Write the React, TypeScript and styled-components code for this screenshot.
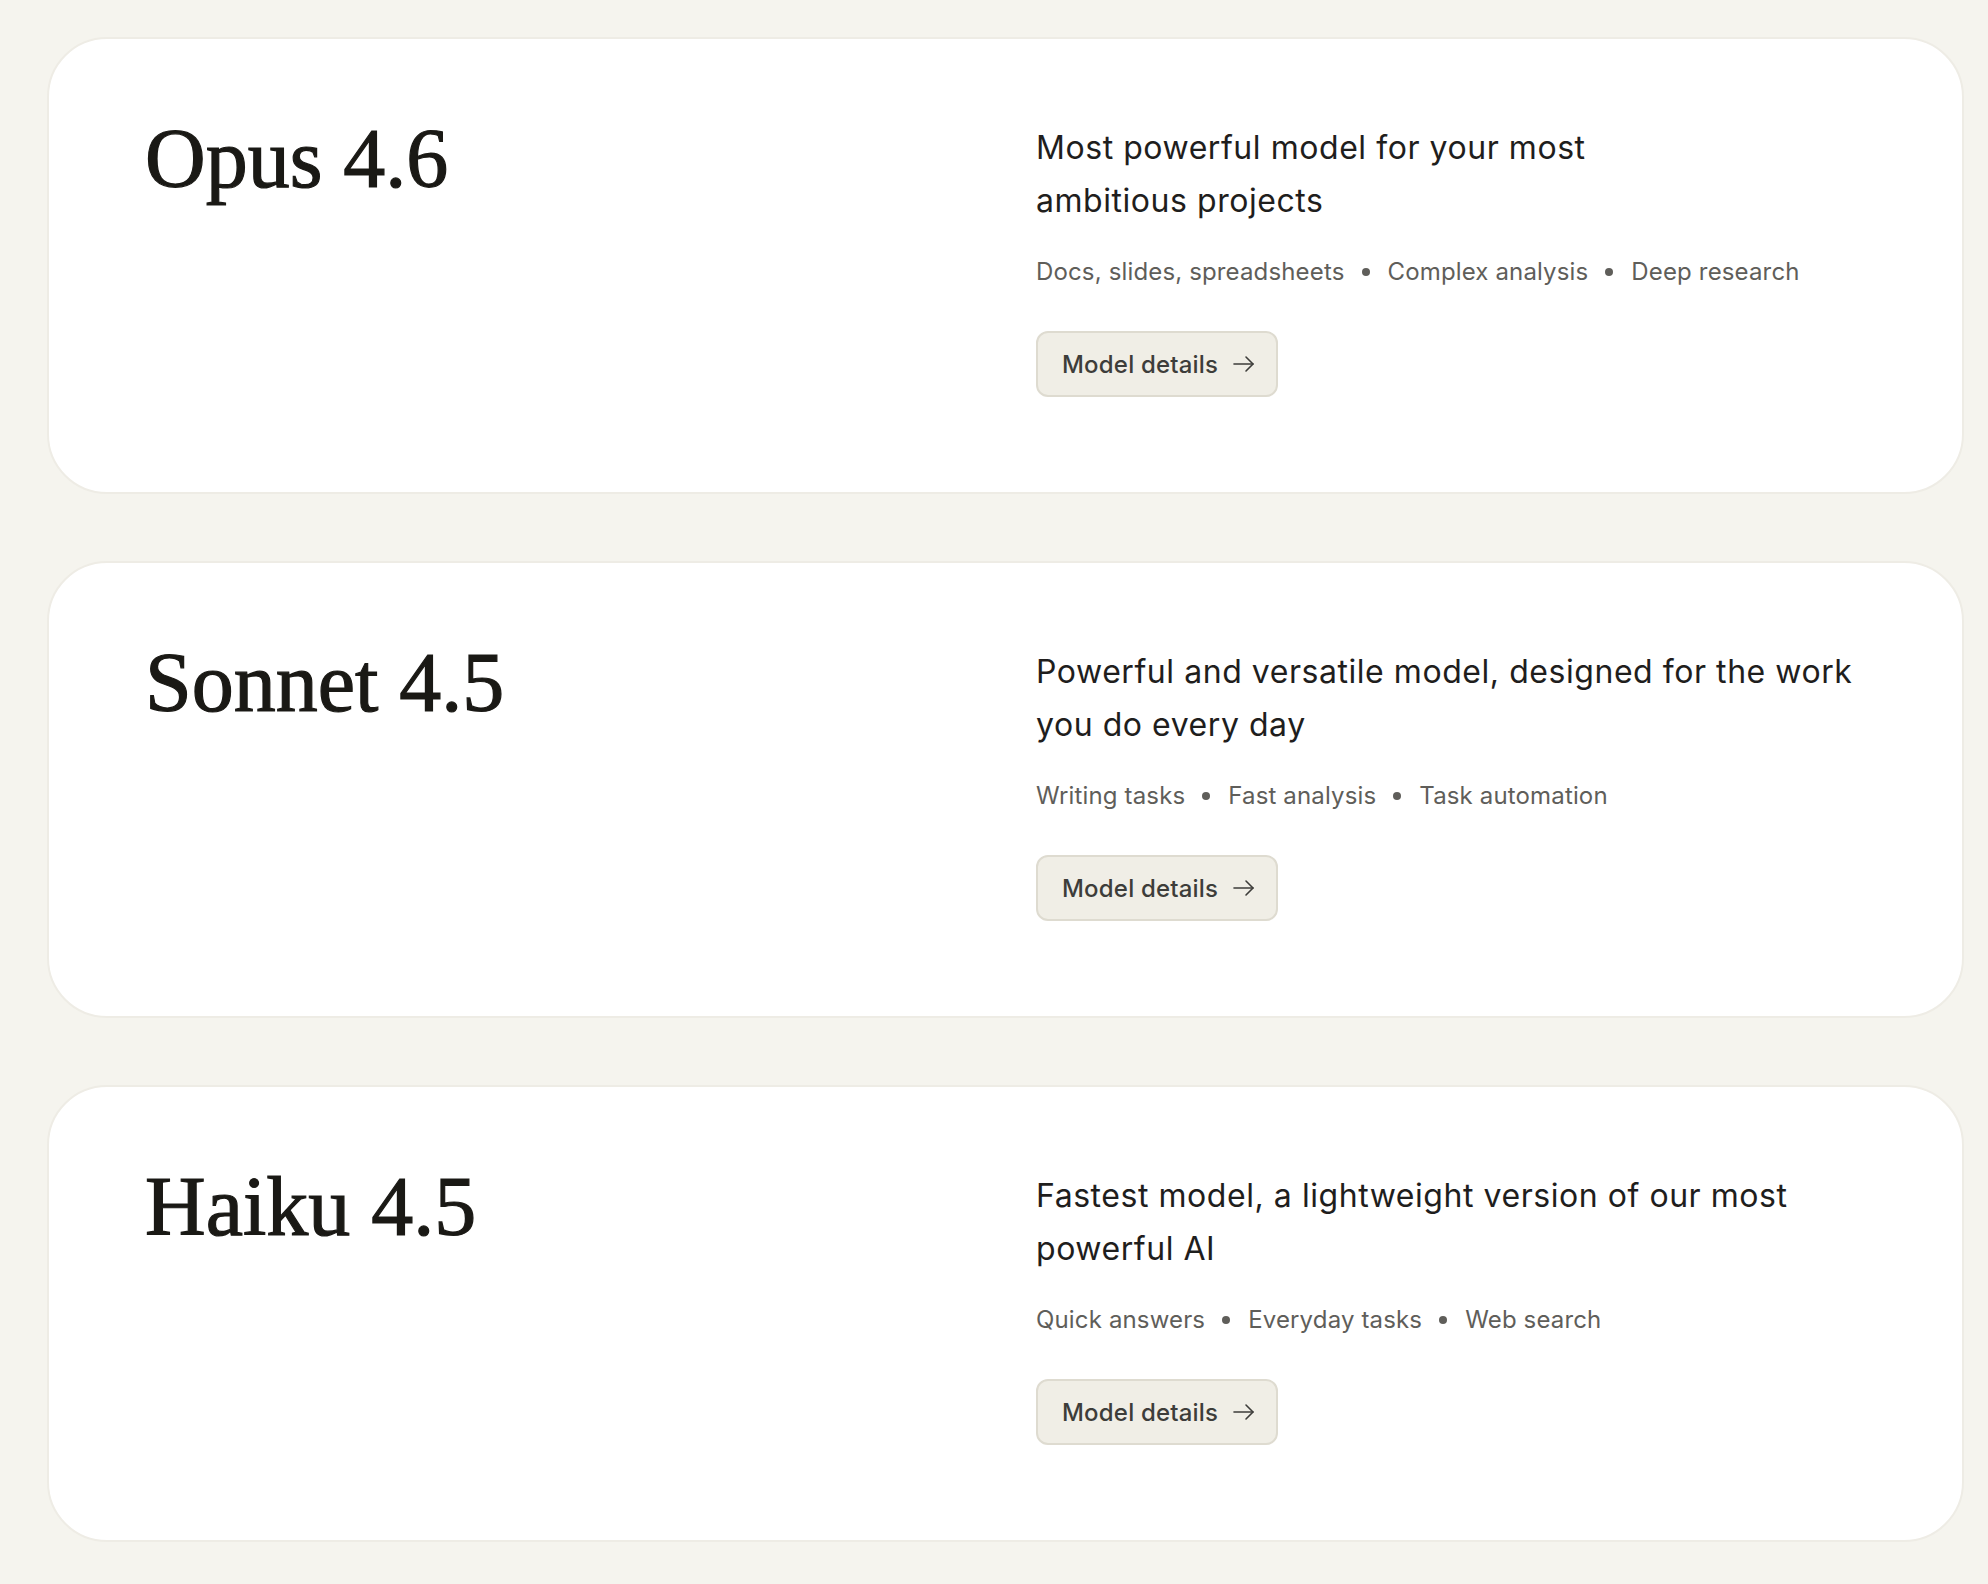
import styled, { createGlobalStyle } from 'styled-components';

const GlobalStyle = createGlobalStyle`
    html, body {
        margin: 0;
        padding: 0;
        background: #f5f4ee;
    }
    * {
        box-sizing: border-box;
    }
`;

const Page = styled.main`
    display: flex;
    flex-direction: column;
    gap: 67px;
    padding: 37px 24px 43px 47px;
    min-height: 100vh;
`;

const Card = styled.section`
    display: grid;
    grid-template-columns: minmax(0, 1fr) 836px;
    height: 457px;
    padding: 82px 90px 0 96px;
    background: #ffffff;
    border: 2px solid #eeece5;
    border-radius: 60px;
`;

const Title = styled.h2`
    margin: 0;
    font-family: 'Liberation Serif', 'DejaVu Serif', serif;
    font-weight: 400;
    font-size: 84px;
    line-height: 76px;
    color: #1a1915;
    -webkit-text-stroke: 1.2px #1a1915;
`;

const Info = styled.div`
    display: flex;
    flex-direction: column;
    align-items: flex-start;
`;

const Description = styled.p<{ $maxWidth?: number }>`
    margin: 0;
    max-width: ${(p) => (p.$maxWidth ? `${p.$maxWidth}px` : 'none')};
    font-family: Inter, 'Noto Sans', sans-serif;
    font-size: 32px;
    line-height: 53px;
    letter-spacing: 0.55px;
    color: #1f1e1d;
`;

const Tags = styled.ul`
    display: flex;
    align-items: center;
    list-style: none;
    margin: 29px 0 0;
    padding: 0;
    font-family: Inter, 'Noto Sans', sans-serif;
    font-size: 24px;
    line-height: 32px;
    letter-spacing: 0.15px;
    color: #5f5e5a;
`;

const Tag = styled.li`
    display: flex;
    align-items: center;

    & + &::before {
        content: '';
        width: 8px;
        height: 8px;
        margin: 0 18px 0 17px;
        border-radius: 50%;
        background: #5f5e5a;
    }
`;

const DetailsButton = styled.button`
    display: inline-flex;
    align-items: center;
    gap: 14px;
    height: 66px;
    margin-top: 43px;
    padding: 0 20px 0 24px;
    background: #f0eee6;
    border: 2px solid #dedbd0;
    border-radius: 12px;
    font-family: Inter, 'Noto Sans', sans-serif;
    font-size: 24px;
    font-weight: 500;
    letter-spacing: 0.2px;
    color: #3d3d3a;
    cursor: pointer;
`;

const ArrowIcon = () => (
    <svg width='24' height='24' viewBox='0 0 24 24' fill='none' stroke='currentColor' strokeWidth='1.6' strokeLinecap='round' strokeLinejoin='round'>
        <path d='M2 12h19' />
        <path d='M14 5l7 7-7 7' />
    </svg>
);

type Model = {
    name: string;
    description: string;
    maxWidth?: number;
    tags: string[];
};

const models: Model[] = [
    {
        name: 'Opus 4.6',
        description: 'Most powerful model for your most ambitious projects',
        maxWidth: 660,
        tags: ['Docs, slides, spreadsheets', 'Complex analysis', 'Deep research'],
    },
    {
        name: 'Sonnet 4.5',
        description: 'Powerful and versatile model, designed for the work you do every day',
        tags: ['Writing tasks', 'Fast analysis', 'Task automation'],
    },
    {
        name: 'Haiku 4.5',
        description: 'Fastest model, a lightweight version of our most powerful AI',
        tags: ['Quick answers', 'Everyday tasks', 'Web search'],
    },
];

export default function App() {
    return (
        <>
            <GlobalStyle />
            <Page>
                {models.map((model) => (
                    <Card key={model.name}>
                        <Title>{model.name}</Title>
                        <Info>
                            <Description $maxWidth={model.maxWidth}>{model.description}</Description>
                            <Tags>
                                {model.tags.map((tag) => (
                                    <Tag key={tag}>{tag}</Tag>
                                ))}
                            </Tags>
                            <DetailsButton>
                                Model details
                                <ArrowIcon />
                            </DetailsButton>
                        </Info>
                    </Card>
                ))}
            </Page>
        </>
    );
}
